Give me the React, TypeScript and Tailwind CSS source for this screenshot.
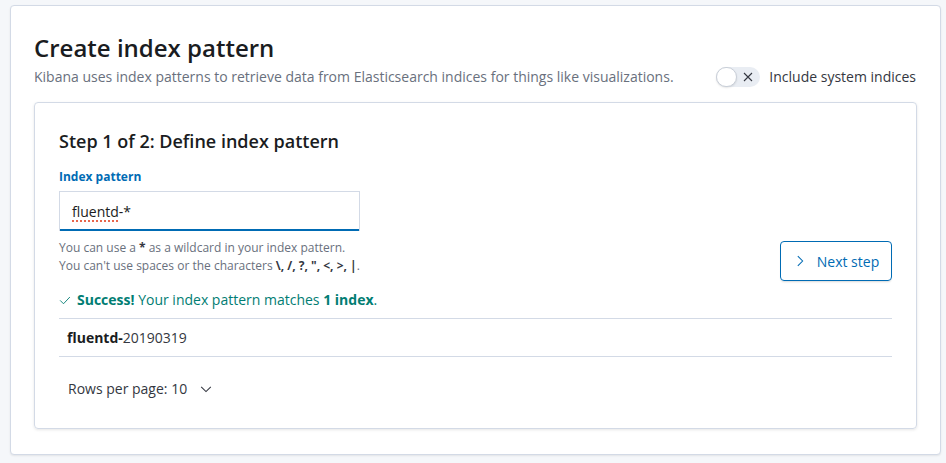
import React from "react"

const font = { fontFamily: '"Open Sans", "Noto Sans", sans-serif' }

function Check() {
  return (
    <svg width="12" height="12" viewBox="0 0 16 16" fill="none" stroke="currentColor" strokeWidth="1.2">
      <path d="M1.5 8.5 L6 13 L14.5 4" />
    </svg>
  )
}

function Chevron({ dir }: { dir: "right" | "down" }) {
  return (
    <svg width="14" height="14" viewBox="0 0 16 16" fill="none" stroke="currentColor" strokeWidth="1.2">
      {dir === "right" ? <path d="M5.5 2.5 L11 8 L5.5 13.5" /> : <path d="M2.5 5.5 L8 11 L13.5 5.5" />}
    </svg>
  )
}

export default function App() {
  return (
    <div className="w-[946px] h-[463px] bg-[#f5f7fa] pt-[5px] pl-[10px]" style={font}>
      <div className="w-[931px] h-[450px] bg-white border border-[#d3dae6] rounded shadow-[0_1px_2px_rgba(0,0,0,0.08)] px-[23px] pt-[26px]">
        <h1 className="text-[24px] leading-[32px] font-semibold text-[#1a1c21]">Create index pattern</h1>
        <div className="mt-[2px] flex items-center justify-between">
          <p className="text-[14px] leading-[20px] text-[#69707d]">
            Kibana uses index patterns to retrieve data from Elasticsearch indices for things like visualizations.
          </p>
          <div className="flex items-center gap-[9px] mr-[1px]">
            <div className="relative w-[44px] h-[20px] rounded-full bg-[#e9edf3]">
              <div className="absolute left-0 top-0 w-[21px] h-[20px] rounded-full bg-white border border-[#c9cfd8] shadow-[0_1px_2px_rgba(0,0,0,0.1)]" />
              <svg className="absolute left-[27px] top-[5px]" width="10" height="10" viewBox="0 0 10 10" stroke="#343741" strokeWidth="1.1">
                <path d="M1 1 L9 9 M9 1 L1 9" />
              </svg>
            </div>
            <span className="text-[14px] text-[#343741]">Include system indices</span>
          </div>
        </div>

        <div className="mt-[15px] w-[883px] h-[327px] border border-[#d3dae6] rounded shadow-[0_1px_3px_rgba(0,0,0,0.1)] px-[24px] pt-[26px]">
          <h2 className="text-[18px] leading-[24px] font-semibold text-[#1a1c21]">Step 1 of 2: Define index pattern</h2>
          <div className="flex justify-between">
            <div>
              <div className="mt-[15px] text-[12px] leading-[18px] font-bold text-[#006bb4]">Index pattern</div>
              <div className="mt-[5px] w-[301px] h-[40px] bg-white border border-[#d3dae6] border-b-0 shadow-[inset_0_-2px_0_#006bb4] px-[12px] flex items-center">
                <span className="text-[14px] text-[#1a1c21]">
                  <span className="underline decoration-dotted decoration-[#e7664c] decoration-2 underline-offset-[3px]">fluentd</span>-*
                </span>
              </div>
              <div className="mt-[8px] text-[12px] leading-[18px] text-[#69707d]">
                <div>
                  You can use a <b className="text-[#343741]">*</b> as a wildcard in your index pattern.
                </div>
                <div>
                  You can't use spaces or the characters <b className="text-[#343741]">\, /, ?, ", &lt;, &gt;, |</b>.
                </div>
              </div>
            </div>
            <button className="mt-[88px] w-[112px] h-[40px] border border-[#006bb4] rounded text-[#006bb4] text-[14px] flex items-center justify-center gap-[10px] shadow-[0_2px_2px_-1px_rgba(0,0,0,0.15)]">
              <Chevron dir="right" />
              <span>Next step</span>
            </button>
          </div>

          <div className="mt-[8px] flex items-center gap-[6px] text-[14px] text-[#017d73]">
            <Check />
            <span>
              <b>Success!</b> Your index pattern matches <b>1 index</b>.
            </span>
          </div>
          <div className="mt-[8px] border-t border-b border-[#d3dae6] h-[39px] flex items-center px-[8px] text-[14px] text-[#343741]">
            <span>
              <b className="text-[#1a1c21]">fluentd-</b>20190319
            </span>
          </div>
          <div className="mt-[21px] flex items-center gap-[12px] px-[9px] text-[14px] text-[#343741]">
            <span>Rows per page: 10</span>
            <Chevron dir="down" />
          </div>
        </div>
      </div>
    </div>
  )
}
